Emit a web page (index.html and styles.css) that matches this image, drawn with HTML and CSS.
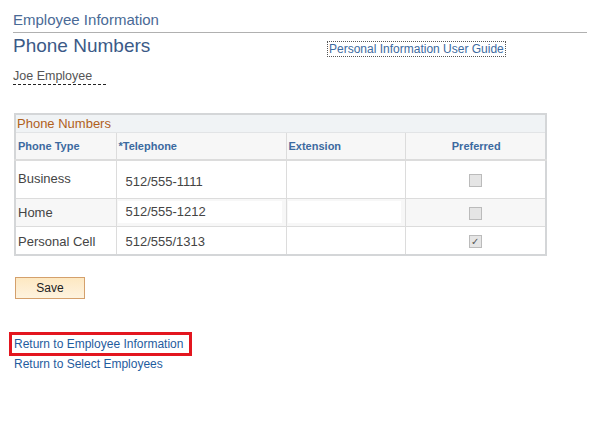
FILE: index.html
```html
<!DOCTYPE html>
<html>
<head>
    <link rel="stylesheet" href="styles.css">
</head>
<body>
    <div class="page-title">Employee Information</div>
    <div class="heading-row">
        <h1>Phone Numbers</h1>
        <a class="guide" href="#">Personal Information User Guide</a>
    </div>
    <div class="employee">Joe Employee</div>

    <table class="grid">
        <tr class="title-row"><td class="grid-title" colspan="4">Phone Numbers</td></tr>
        <tr class="head">
            <th class="c-type">Phone Type</th>
            <th class="c-tel">*Telephone</th>
            <th class="c-ext">Extension</th>
            <th class="c-pref">Preferred</th>
        </tr>
        <tr class="row-business">
            <td class="type">Business</td>
            <td class="tel">512/555-1111</td>
            <td></td>
            <td class="pref"><span class="check"></span></td>
        </tr>
        <tr class="row-home">
            <td class="type">Home</td>
            <td class="tel"><span class="field">512/555-1212</span></td>
            <td><span class="field"></span></td>
            <td class="pref"><span class="check"></span></td>
        </tr>
        <tr class="row-cell">
            <td class="type">Personal Cell</td>
            <td class="tel">512/555/1313</td>
            <td></td>
            <td class="pref"><span class="check">&#10003;</span></td>
        </tr>
    </table>

    <button class="save">Save</button>

    <div class="links">
        <a class="current" href="#">Return to Employee Information</a>
        <a href="#">Return to Select Employees</a>
    </div>
</body>
</html>
```

FILE: styles.css
```css
body {
    font-family: Arial, "Liberation Sans", sans-serif;
    margin: 0;
    padding: 11px 13px 0 13px;
    color: #333;
}
a {
    color: #1f5c9e;
    text-decoration: none;
}
.page-title {
    font-size: 15px;
    color: #4a6a96;
    padding-bottom: 4px;
    border-bottom: 1px solid #b0b0b0;
}
.heading-row {
    display: flex;
    align-items: flex-start;
}
h1 {
    font-size: 19px;
    font-weight: normal;
    color: #3b5a87;
    margin: 2px 0 0 0;
    width: 314px;
}
.guide {
    font-size: 12px;
    color: #3c6aa0;
    border: 1px dotted #555;
    margin-top: 8px;
    padding: 0 1px;
    line-height: 14px;
}
.employee {
    font-size: 12.5px;
    color: #555;
    margin-top: 12px;
    width: 93px;
    padding-bottom: 1px;
    border-bottom: 1px dashed #222;
}
.grid {
    border-collapse: collapse;
    margin-top: 28px;
    margin-left: 1px;
    width: 533px;
    border: 2px solid #d4d6d8;
    font-size: 13px;
    color: #444;
}
.grid td, .grid th {
    border: 1px solid #dcdcdc;
    padding: 0;
    box-sizing: border-box;
}
.grid .title-row td {
    background-color: #f0f3f5;
    color: #b0601c;
    font-size: 13px;
    height: 18px;
    line-height: 15px;
    padding-left: 1px;
    border-bottom-color: #e2e4e6;
}
.grid .head th {
    background-color: #f7f7f7;
    color: #3c6aa0;
    font-size: 11px;
    font-weight: bold;
    text-align: left;
    height: 28px;
    padding-left: 2px;
    border-bottom: 2px solid #dcdcdc;
}
.grid .head .c-pref {
    text-align: center;
}
.grid .c-type { width: 101px; }
.grid .c-tel { width: 170px; }
.grid .c-ext { width: 119px; }
.grid .type {
    padding-left: 2px;
}
.grid .tel {
    padding-left: 9px;
}
.grid .row-business td {
    height: 38px;
}
.grid .row-business .type {
    vertical-align: top;
    padding-top: 10px;
}
.grid .row-business .tel {
    padding-top: 4px;
}
.grid .row-home td {
    height: 28px;
    background-color: #f7f7f7;
}
.grid .row-home .tel {
    padding-left: 0;
}
.grid .row-cell td {
    height: 29px;
}
.grid .row-cell .type {
    vertical-align: top;
    padding-top: 7px;
}
.grid .row-cell .tel {
    padding-top: 3px;
}
.field {
    display: block;
    background: #fff;
    height: 22px;
    line-height: 22px;
    margin: 0 4px 0 1px;
}
.row-home .tel .field {
    padding-left: 8px;
}
.grid .pref {
    text-align: center;
}
.check {
    display: inline-block;
    width: 11px;
    height: 11px;
    background: #e5e5e5;
    border: 1px solid #bbb;
    vertical-align: middle;
    font-size: 10px;
    line-height: 11px;
    color: #555;
}
.save {
    display: block;
    margin: 21px 0 0 2px;
    width: 70px;
    height: 22px;
    font-family: Arial, "Liberation Sans", sans-serif;
    font-size: 12px;
    color: #222;
    background: linear-gradient(#fde8c2, #fef3df);
    border: 1px solid #d4a06c;
    padding: 0;
}
.links {
    display: flex;
    flex-direction: column;
    align-items: flex-start;
    margin-top: 35px;
    font-size: 12px;
}
.links a {
    line-height: 20px;
    padding-left: 1px;
}
.links .current {
    outline: 3px solid #e3161f;
    outline-offset: -1px;
    margin-left: -2px;
    padding: 0 7px 0 3px;
}
```
